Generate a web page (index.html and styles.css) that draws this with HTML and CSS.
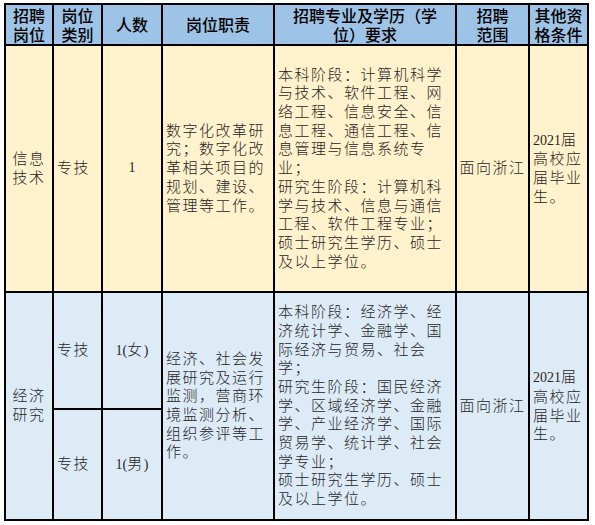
FILE: index.html
```html
<!DOCTYPE html>
<html lang="zh-CN">
<head>
<meta charset="utf-8">
<title>招聘岗位</title>
<link rel="stylesheet" href="styles.css">
</head>
<body>
<div class="sheet">
  <div class="grid">
    <div class="cell head"><div><div class="hl">招聘</div><div class="hl">岗位</div></div></div>
    <div class="cell head"><div><div class="hl">岗位</div><div class="hl">类别</div></div></div>
    <div class="cell head"><div class="hl">人数</div></div>
    <div class="cell head"><div class="hl">岗位职责</div></div>
    <div class="cell head"><div><div class="hl">招聘专业及学历（学</div><div class="hl">位）要求</div></div></div>
    <div class="cell head"><div><div class="hl">招聘</div><div class="hl">范围</div></div></div>
    <div class="cell head"><div><div class="hl">其他资</div><div class="hl">格条件</div></div></div>

    <div class="cell y center">信息<br>技术</div>
    <div class="cell y left">专技</div>
    <div class="cell y center"><span class="num">1</span></div>
    <div class="cell y left">数字化改革研<br>究；数字化改<br>革相关项目的<br>规划、建设、<br>管理等工作。</div>
    <div class="cell y left">本科阶段：计算机科学<br>与技术、软件工程、网<br>络工程、信息安全、信<br>息工程、通信工程、信<br>息管理与信息系统专<br>业；<br>研究生阶段：计算机科<br>学与技术、信息与通信<br>工程、软件工程专业；<br>硕士研究生学历、硕士<br>及以上学位。</div>
    <div class="cell y center">面向浙江</div>
    <div class="cell y left"><span><span class="num">2021</span>届<br>高校应<br>届毕业<br>生。</span></div>

    <div class="cell b center span2">经济<br>研究</div>
    <div class="cell b left">专技</div>
    <div class="cell b center"><span><span class="num">1(</span>女<span class="num">)</span></span></div>
    <div class="cell b left span2">经济、社会发<br>展研究及运行<br>监测，营商环<br>境监测分析、<br>组织参评等工<br>作。</div>
    <div class="cell b left span2">本科阶段：经济学、经<br>济统计学、金融学、国<br>际经济与贸易、社会<br>学；<br>研究生阶段：国民经济<br>学、区域经济学、金融<br>学、产业经济学、国际<br>贸易学、统计学、社会<br>学专业；<br>硕士研究生学历、硕士<br>及以上学位。</div>
    <div class="cell b center span2">面向浙江</div>
    <div class="cell b left span2"><span><span class="num">2021</span>届<br>高校应<br>届毕业<br>生。</span></div>
    <div class="cell b left">专技</div>
    <div class="cell b center"><span><span class="num">1(</span>男<span class="num">)</span></span></div>
  </div>
</div>
</body>
</html>
```

FILE: styles.css
```css
html, body {
  margin: 0;
  padding: 0;
  background: #ffffff;
}

.sheet {
  padding: 3px 0 0 4px;
}

.grid {
  display: grid;
  grid-template-columns: 46px 47px 58px 110px 180px 71px 57px;
  grid-template-rows: 39px 245px 115px 109px;
  gap: 2px;
  padding: 2px;
  background: #000000;
  width: max-content;
}

.cell {
  display: flex;
  align-items: center;
  overflow: hidden;
  white-space: nowrap;
  font-family: "Liberation Serif", "Noto Sans CJK SC", serif;
  font-size: 15px;
  letter-spacing: 1.5px;
  line-height: 18.7px;
  color: #262626;
  font-weight: 300;
}

.head {
  background: #9dc3e6;
  justify-content: center;
  text-align: center;
  overflow: visible;
  font-family: "Noto Sans CJK SC", sans-serif;
  font-size: 16px;
  letter-spacing: 0;
  line-height: 19px;
  font-weight: 500;
  color: #000000;
}

.hl {
  height: 19px;
  line-height: 19px;
}

.y {
  background: #fff2cc;
}

.b {
  background: #ddebf7;
}

.center {
  justify-content: center;
  text-align: center;
}

.left {
  justify-content: flex-start;
  text-align: left;
  padding-left: 3px;
}

.span2 {
  grid-row: span 2;
}

.num {
  font-family: "Liberation Serif", serif;
  font-size: 14px;
  letter-spacing: 0;
}
```
